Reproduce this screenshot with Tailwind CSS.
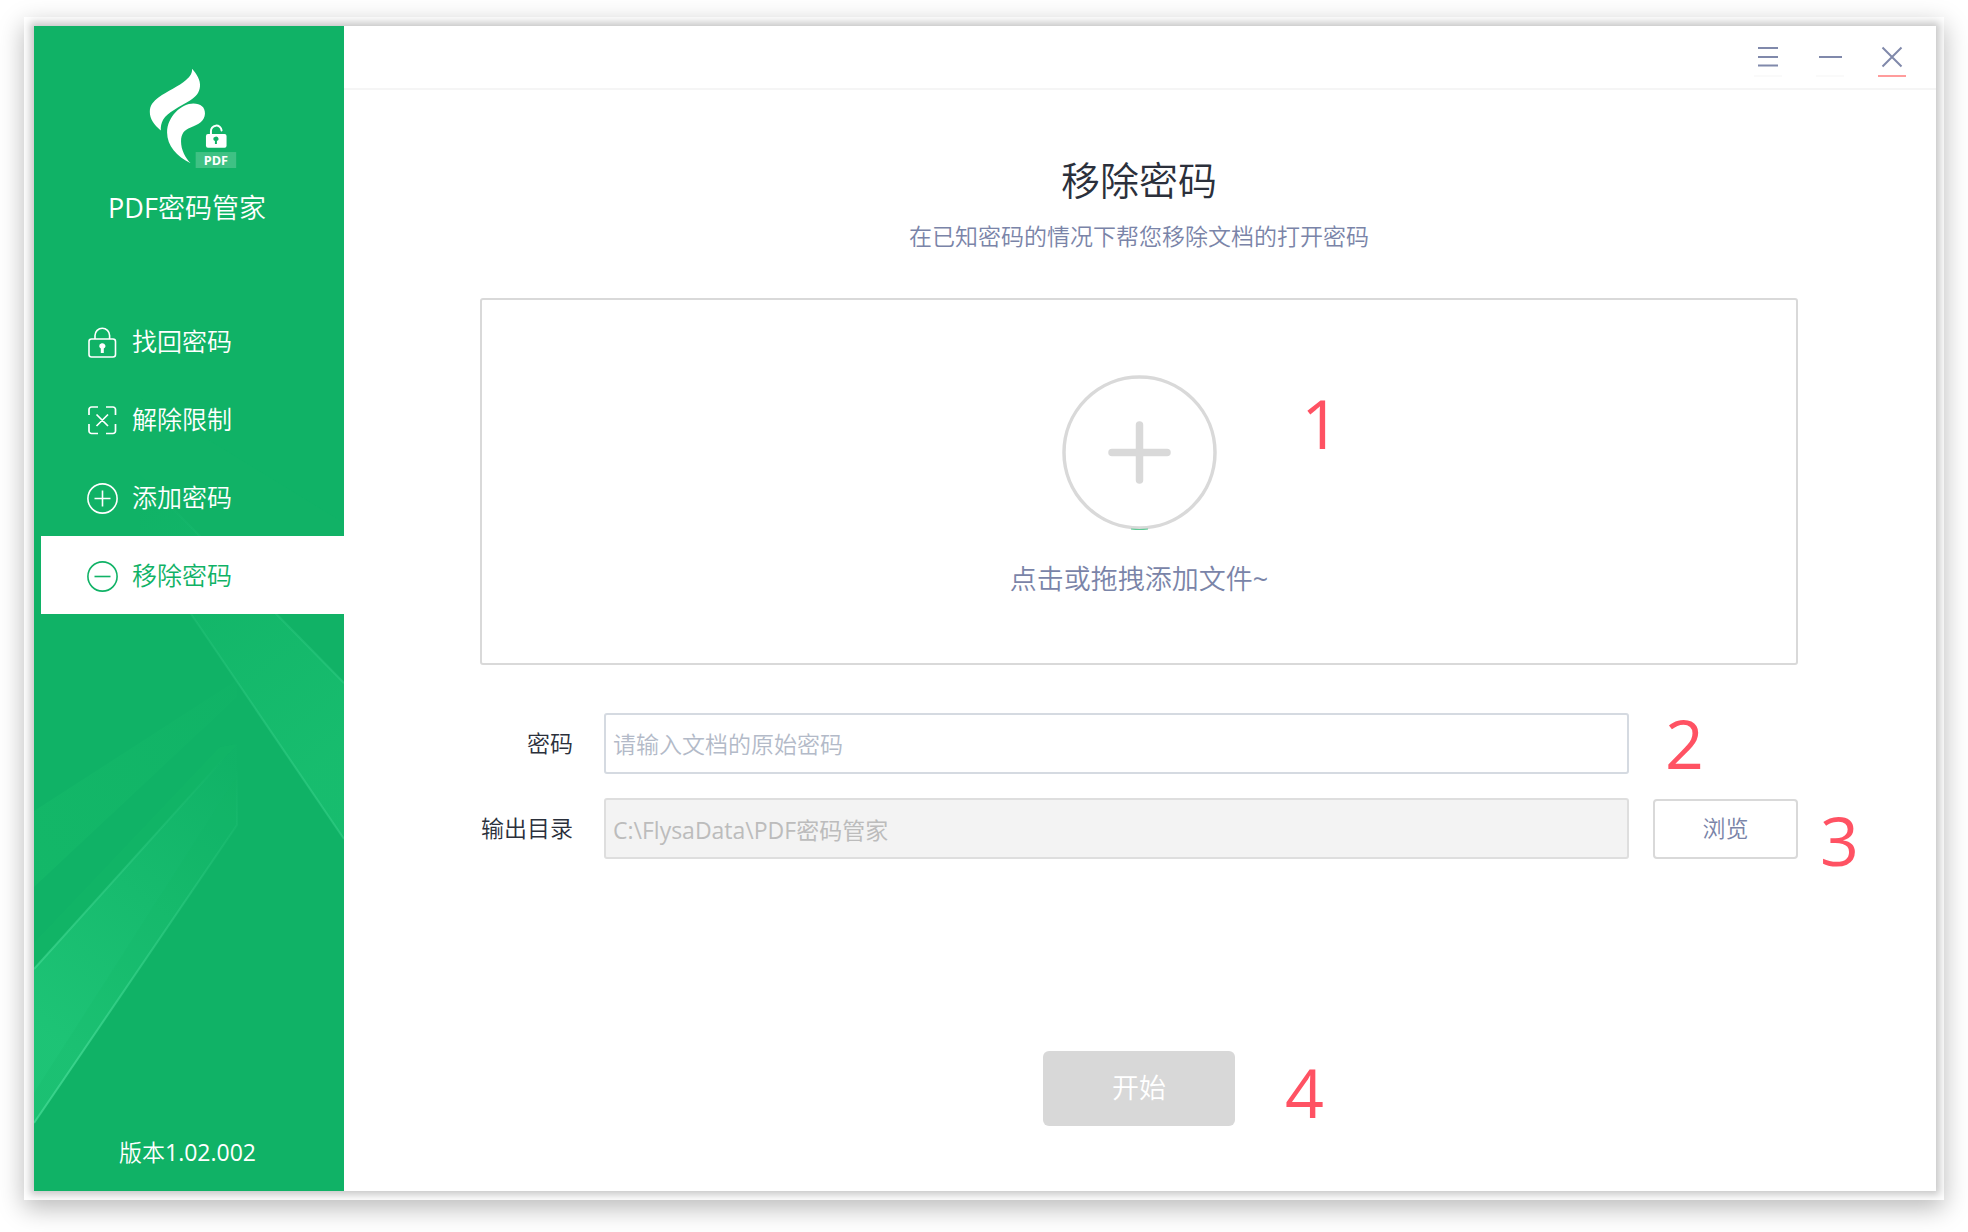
<!DOCTYPE html>
<html lang="zh-CN">
<head>
    <meta charset="UTF-8">
    <meta name="viewport" content="width=device-width, initial-scale=1.0">
    <title>PDF密码管家</title>
    <script src="https://cdn.jsdelivr.net/npm/@tailwindcss/browser@4"></script>
</head>
<body class="bg-white font-['Open_Sans','Noto_Sans_CJK_SC',sans-serif]">
    <div class="min-h-screen flex px-6 pt-[17px] pb-8">
        <!-- Window frame -->
        <div class="flex flex-1 overflow-hidden bg-white pl-[10px] pr-2 py-[9px] shadow-[0_8px_24px_rgba(0,0,0,0.28)]">
            <div class="flex flex-1 bg-white shadow-[0_0_8px_4px_rgba(0,0,0,0.22)]">

                <!-- Sidebar -->
                <aside class="relative flex flex-col w-[310px] shrink-0 bg-[#10b266] text-white">
                    <svg class="absolute inset-0 w-full h-full" viewBox="0 0 310 1165" preserveAspectRatio="none" fill="none" aria-hidden="true">
                        <defs>
                            <linearGradient id="beamRight" x1="106" y1="460" x2="310" y2="720" gradientUnits="userSpaceOnUse">
                                <stop offset="0" stop-color="#28d480" stop-opacity="0"/>
                                <stop offset="1" stop-color="#28d480" stop-opacity="0.3"/>
                            </linearGradient>
                            <linearGradient id="beamLeft" x1="203" y1="740" x2="0" y2="1000" gradientUnits="userSpaceOnUse">
                                <stop offset="0" stop-color="#2bd585" stop-opacity="0.02"/>
                                <stop offset="1" stop-color="#2bd585" stop-opacity="0.5"/>
                            </linearGradient>
                            <linearGradient id="beamFaint" x1="203" y1="660" x2="0" y2="830" gradientUnits="userSpaceOnUse">
                                <stop offset="0" stop-color="#20cc70" stop-opacity="0.04"/>
                                <stop offset="1" stop-color="#20cc70" stop-opacity="0.2"/>
                            </linearGradient>
                            <linearGradient id="edgeRight" x1="106" y1="460" x2="310" y2="740" gradientUnits="userSpaceOnUse">
                                <stop offset="0" stop-color="#4ade9a" stop-opacity="0"/>
                                <stop offset="1" stop-color="#4ade9a" stop-opacity="0.35"/>
                            </linearGradient>
                            <linearGradient id="edgeLeft" x1="203" y1="740" x2="0" y2="1000" gradientUnits="userSpaceOnUse">
                                <stop offset="0" stop-color="#4ade9a" stop-opacity="0"/>
                                <stop offset="1" stop-color="#4ade9a" stop-opacity="0.65"/>
                            </linearGradient>
                        </defs>
                        <path d="M106 372 310 497V657L106 449Z" fill="#20cc70" fill-opacity="0.05"/>
                        <path d="M106 449 310 657V813L106 513Z" fill="url(#beamRight)"/>
                        <path d="M106 449 310 657M106 513 310 813" stroke="url(#edgeRight)" stroke-width="2"/>
                        <path d="M0 785 203 654V671L0 861Z" fill="url(#beamFaint)"/>
                        <path d="M0 917 186 721 203 718 0 943Z" fill="#20cc70" fill-opacity="0.1"/>
                        <path d="M0 943 203 718V799L0 1097Z" fill="url(#beamLeft)"/>
                        <path d="M0 1067 203 750V799L0 1097Z" fill="#10b266" fill-opacity="0.16"/>
                        <path d="M0 943 203 718V799L0 1097" stroke="url(#edgeLeft)" stroke-width="2"/>
                    </svg>

                    <!-- Logo -->
                    <div class="relative flex flex-col items-center pt-[42px]">
                        <svg class="w-[90px] h-[101px] ml-2" viewBox="444 204 270 304" aria-hidden="true">
                            <path fill="#fff" d="M576 206C590 222 602 240 600 260C598 279 588 291 570 302C540 320 502 338 489 360C483 371 482 380 482 392C462 376 449 358 449 336C449 316 460 304 476 292C500 274 538 258 558 240C572 228 577 218 576 206Z"/>
                            <path fill="#fff" d="M580 311C602 311 616 322 615 342C614 364 596 374 572 383C552 391 543 402 543 425C543 450 556 474 572 491C530 470 501 438 501 398C501 350 545 311 580 311Z"/>
                            <rect x="618" y="403" width="62" height="41" rx="6" fill="#fff"/>
                            <path d="M633 406V395a16 16 0 0 1 32 -3" fill="none" stroke="#fff" stroke-width="6" stroke-linecap="round"/>
                            <path d="M640 418a8 7 0 1 1 11 6v9h-6v-9a8 7 0 0 1-5-6Z" fill="#10b266"/>
                            <rect x="587" y="457" width="122" height="48" fill="#fff" fill-opacity="0.2"/>
                            <text x="648" y="495" text-anchor="middle" font-size="38" font-weight="700" fill="#fff">PDF</text>
                        </svg>
                        <h1 class="mt-5 pr-1 text-[27px] leading-[38px] font-[350]"><span class="font-normal">PDF</span>密码管家</h1>
                    </div>

                    <!-- Menu -->
                    <nav class="relative flex flex-col mt-[75px] ml-[7px] text-[25px] font-[350]">
                        <a href="#" class="flex items-center gap-[14px] h-[78px] pl-[46px] pt-[2px]">
                            <svg class="w-[31px] h-[31px]" viewBox="0 0 31 31" fill="none" stroke="currentColor" stroke-width="1.6" aria-hidden="true">
                                <rect x="2" y="12" width="26.500" height="18" rx="2.500"/>
                                <path d="M8 12V8.500a7.300 7.300 0 0 1 14.600 0V12"/>
                                <path d="M12.200 19.200a3.100 2.800 0 1 1 4.600 2.300V26h-3v-4.500a3 3 0 0 1-1.600-2.300Z" fill="currentColor" stroke="none"/>
                            </svg>
                            找回密码
                        </a>
                        <a href="#" class="flex items-center gap-[14px] h-[78px] pl-[46px] pt-[2px]">
                            <svg class="w-[31px] h-[31px]" viewBox="0 0 31 31" fill="none" stroke="currentColor" stroke-width="1.7" aria-hidden="true">
                                <path d="M2 10V4.500A2.500 2.500 0 0 1 4.500 2H11M19 2h7a2.500 2.500 0 0 1 2.500 2.500V10M28.500 19v7a2.500 2.500 0 0 1-2.500 2.500h-7M11 28.500H4.500A2.500 2.500 0 0 1 2 26v-7M9.500 9.500l11.500 11.500M21 9.500 9.500 21"/>
                            </svg>
                            解除限制
                        </a>
                        <a href="#" class="flex items-center gap-[14px] h-[78px] pl-[46px] pt-[2px]">
                            <svg class="w-[31px] h-[31px]" viewBox="0 0 31 31" fill="none" stroke="currentColor" stroke-width="1.6" aria-hidden="true">
                                <circle cx="15.500" cy="15.500" r="14.600"/>
                                <path d="M7.500 15.500h16M15.500 7.500v16"/>
                            </svg>
                            添加密码
                        </a>
                        <a href="#" aria-current="page" class="flex items-center gap-[14px] h-[78px] pl-[46px] pt-[2px] bg-white text-[#10b266]">
                            <svg class="w-[31px] h-[31px]" viewBox="0 0 31 31" fill="none" stroke="currentColor" stroke-width="1.6" aria-hidden="true">
                                <circle cx="15.500" cy="15.500" r="14.600"/>
                                <path d="M7.500 15.500h16"/>
                            </svg>
                            移除密码
                        </a>
                    </nav>

                    <p class="relative mt-auto pb-[23px] pr-[3px] text-center text-[23px] leading-8 font-[350]">版本<span class="font-normal">1.02.002</span></p>
                </aside>

                <!-- Main -->
                <div class="flex flex-col flex-1 min-w-0">
                    <header class="flex justify-end gap-[34px] h-16 pt-[14px] pr-[30px] border-b-2 border-[#f5f5f5] text-[#8089ab]">
                        <button type="button" aria-label="菜单" class="w-7 h-[37px] border-b-2 border-[#fafafa]">
                            <svg class="w-7 h-[35px]" viewBox="0 0 28 35" fill="none" stroke="currentColor" stroke-width="2" aria-hidden="true">
                                <path d="M4 8h20M4 17h20M4 25.500h20"/>
                            </svg>
                        </button>
                        <button type="button" aria-label="最小化" class="w-7 h-[37px] border-b-2 border-[#fafafa]">
                            <svg class="w-7 h-[35px]" viewBox="0 0 28 35" fill="none" stroke="currentColor" stroke-width="2" aria-hidden="true">
                                <path d="M3 17h23"/>
                            </svg>
                        </button>
                        <button type="button" aria-label="关闭" class="w-7 h-[37px] border-b-2 border-[#ff9c9c]">
                            <svg class="w-7 h-[35px]" viewBox="0 0 28 35" fill="none" stroke="currentColor" stroke-width="2" aria-hidden="true">
                                <path d="M4.500 7.500l19 19M23.500 7.500l-19 19"/>
                            </svg>
                        </button>
                    </header>

                    <main class="flex flex-col flex-1 pl-[136px] pr-[138px] pt-[66px] pb-[65px]">
                        <h2 class="text-center text-[39px] leading-[48px] font-[350] text-[#2b303b]">移除密码</h2>
                        <p class="mt-4 text-center text-[23px] leading-8 font-[350] text-[#7a84a8]">在已知密码的情况下帮您移除文档的打开密码</p>

                        <!-- Drop area -->
                        <div class="relative mt-[46px]">
                            <button type="button" class="flex flex-col items-center w-full h-[367px] pt-[75px] border-2 border-[#d9d9d9] rounded-[3px]">
                                <svg class="w-[155px] h-[155px]" viewBox="0 0 155 155" fill="none" stroke="#d9d9d9" aria-hidden="true">
                                    <circle cx="77.500" cy="77.500" r="75.500" stroke-width="3.500"/>
                                    <path d="M50 77.500h55M77.500 50v55" stroke-width="7.500" stroke-linecap="round"/>
                                    <path d="M69 154q8.500 1 17 0" stroke="#5cc994" stroke-width="1.200"/>
                                </svg>
                                <span class="mt-[30px] text-[27px] leading-[38px] font-[350] text-[#7a84a8]">点击或拖拽添加文件<span class="font-normal">~</span></span>
                            </button>
                            <span class="absolute left-[62%] top-[77px] pl-1 text-[68px] leading-[96px] text-[#ff5263]">1</span>
                        </div>

                        <!-- Form -->
                        <form class="grid grid-cols-[93px_1fr_145px] gap-y-6 items-center mt-12 text-[23px]">
                            <label for="password" class="text-right whitespace-nowrap font-[350] text-[#2b303b]">密码</label>
                            <input type="password" id="password" name="password" placeholder="请输入文档的原始密码"
                                class="ml-[31px] mr-6 h-[61px] px-[7px] border-2 border-[#d5dae1] rounded-[3px] font-[350] placeholder:text-[#b3bac8]">
                            <span class="pl-3 text-[68px] leading-[59px] h-[61px] text-[#ff5263]">2</span>

                            <label for="outputDir" class="text-right whitespace-nowrap font-[350] text-[#2b303b]">输出目录</label>
                            <input type="text" id="outputDir" name="outputDir" value="C:\FlysaData\PDF密码管家" readonly
                                class="ml-[31px] mr-6 h-[61px] px-[7px] border-2 border-[#dedede] rounded-[3px] bg-[#f3f3f3] text-[#bcbcbc]">
                            <div class="relative">
                                <button type="button" class="w-full h-[60px] border-2 border-[#d9d9d9] rounded-[4px] font-[350] text-[#7a84a8]">浏览</button>
                                <span class="absolute left-full top-0 pl-[22px] text-[68px] leading-[82px] text-[#ff5263]">3</span>
                            </div>
                        </form>

                        <!-- Start -->
                        <div class="relative mt-auto mx-auto">
                            <button type="button" disabled class="block w-48 h-[75px] rounded-md bg-[#d8d8d8] text-[27px] font-[350] text-white">开始</button>
                            <span class="absolute left-full top-0 pl-[50px] text-[68px] leading-[82px] text-[#ff5263]">4</span>
                        </div>
                    </main>
                </div>
            </div>
        </div>
    </div>
</body>
</html>
